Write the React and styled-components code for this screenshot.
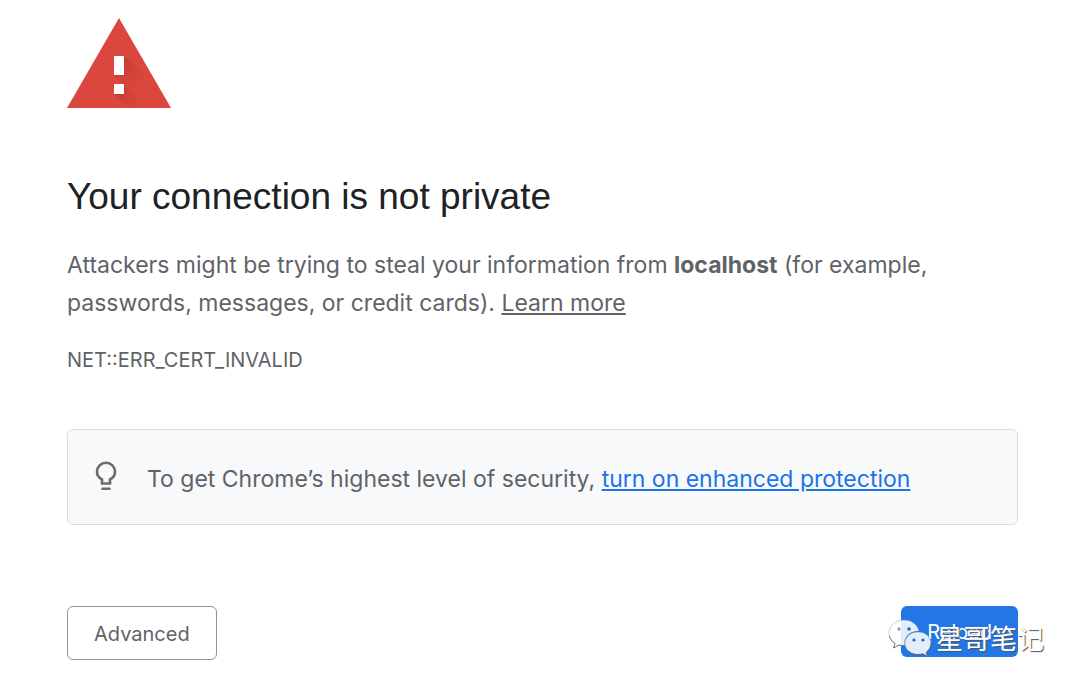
import React from 'react';
import styled, { createGlobalStyle } from 'styled-components';

const GlobalStyle = createGlobalStyle`
  body {
    margin: 0;
    background: #fff;
    color: #5f6368;
    font-family: Inter, "Liberation Sans", sans-serif;
    font-size: 23px;
    line-height: 38px;
  }
`;

const Page = styled.main`
  box-sizing: border-box;
  padding: 18px 62px 27px 67px;
`;

const WarningIcon = styled.svg`
  display: block;
  width: 104px;
  height: 90px;
`;

const Title = styled.h1`
  margin: 66px 0 26px;
  color: #202124;
  font-family: "Liberation Sans", Arial, sans-serif;
  font-size: 37px;
  font-weight: 400;
  line-height: 46px;
`;

const Message = styled.p`
  margin: 0;
`;

const ErrorCode = styled.div`
  margin-top: 24px;
  font-size: 20px;
  line-height: 28px;
`;

const Link = styled.a`
  color: ${({ $primary }) => ($primary ? '#1a73e8' : '#5f6368')};
  text-decoration: underline;
`;

const Tip = styled.section`
  display: flex;
  align-items: flex-start;
  gap: 30px;
  margin-top: 55px;
  padding: 30px 28px 26px 27px;
  border: 1px solid #dadce0;
  border-radius: 6px;
  background: #f8f9fb;
`;

const BulbIcon = styled.svg`
  flex: none;
  width: 22px;
  height: 32px;
`;

const TipText = styled.p`
  margin: 0;
`;

const Actions = styled.div`
  display: flex;
  align-items: flex-start;
  justify-content: space-between;
  margin-top: 81px;
`;

const Button = styled.button`
  box-sizing: border-box;
  padding: ${({ $primary }) => ($primary ? '2px 26px 0' : '2px 26px 0')};
  border: ${({ $primary }) => ($primary ? 'none' : '1px solid #8f959b')};
  border-radius: 6px;
  background: ${({ $primary }) => ($primary ? '#2276e6' : '#fff')};
  color: ${({ $primary }) => ($primary ? '#fff' : '#5f6368')};
  font-family: inherit;
  font-size: 20px;
  line-height: ${({ $primary }) => ($primary ? '49px' : '50px')};
`;

const ReloadArea = styled.div`
  position: relative;
`;

const Watermark = styled.div`
  position: absolute;
  top: 12px;
  right: -26px;
  display: flex;
  align-items: center;
  gap: 4px;
  color: #fff;
  font-family: "Noto Sans CJK SC", sans-serif;
  font-size: 27px;
  line-height: 40px;
  white-space: nowrap;
  text-shadow: 1px 1px 1px #555;
  pointer-events: none;
`;

const ChatIcon = styled.svg`
  width: 44px;
  height: 38px;
`;

export default function App() {
  return (
    <>
      <GlobalStyle />
      <Page>
        <WarningIcon viewBox="0 0 104 90" aria-hidden="true">
          <defs>
            <linearGradient id="shade" x1="50" y1="40" x2="82" y2="72" gradientUnits="userSpaceOnUse">
              <stop offset="0" stopColor="#a92f28" stopOpacity=".6" />
              <stop offset=".6" stopColor="#c53d34" stopOpacity=".2" />
              <stop offset="1" stopColor="#db4437" stopOpacity="0" />
            </linearGradient>
            <linearGradient id="lowShade" x1="50" y1="68" x2="70" y2="88" gradientUnits="userSpaceOnUse">
              <stop offset="0" stopColor="#a92f28" stopOpacity=".6" />
              <stop offset="1" stopColor="#c53d34" stopOpacity=".1" />
            </linearGradient>
          </defs>
          <path d="M52 0 104 90H0Z" fill="#db473e" />
          <path d="M57 38 90 66l14 24H81L47 57Z" fill="url(#shade)" />
          <path d="M57 67 80 90H61L47 76Z" fill="url(#lowShade)" />
          <path d="M47 38h10v19H47zM47 66h10v10H47z" fill="#fff" />
        </WarningIcon>
        <Title>Your connection is not private</Title>
        <Message>
          Attackers might be trying to steal your information from <strong>localhost</strong> (for
          example, passwords, messages, or credit cards). <Link href="#learn">Learn more</Link>
        </Message>
        <ErrorCode>NET::ERR_CERT_INVALID</ErrorCode>
        <Tip>
          <BulbIcon viewBox="0 -1 22 32" fill="none" stroke="#6b6b6b" aria-hidden="true">
            <path
              d="M7 22.5v-4.1C4 16.900 2 14 2 10.700a9 9 0 0 1 18 0c0 3.300-2 6.200-5 7.700v4.100Z"
              strokeWidth="2.600"
            />
            <path d="M7.500 27.700h7" strokeWidth="2.600" strokeLinecap="round" />
          </BulbIcon>
          <TipText>
            To get Chrome’s highest level of security,{' '}
            <Link $primary href="#protection">turn on enhanced protection</Link>
          </TipText>
        </Tip>
        <Actions>
          <Button type="button">Advanced</Button>
          <ReloadArea>
            <Button $primary type="button">Reload</Button>
            <Watermark>
              <ChatIcon viewBox="0 0 44 38" aria-hidden="true">
                <g fill="#fff" fillOpacity=".87" stroke="#777" strokeOpacity=".5" strokeWidth=".7">
                  <path d="M16 1C7.500 1 1 6.500 1 14c0 4.500 2.200 8 6 10.500L5.500 29l5.500-3c2 .6 4 .9 6 .8C15 18 22 12 31 12 29.500 5.500 23.500 1 16 1Z" />
                  <path d="M30 13c-7.500 0-13 4.900-13 11.200C17 30.500 22.500 35.500 30 35.500c1.600 0 3.200-.2 4.600-.7L39.500 37.500l-1.300-4.200c3-2.200 4.800-5.300 4.800-9.100C43 17.900 37.500 13 30 13Z" />
                </g>
                <g fill="none" stroke="#555" strokeOpacity=".75">
                  <path d="M1.500 17c.6 3.200 2.500 5.700 5.500 7.500L5.500 29l5.500-3c2 .6 4 .9 6 .8" />
                  <path d="M43 24.200c0 3.800-1.800 6.900-4.800 9.100l1.300 4.200-4.900-2.700c-5 1.600-11 .5-14.600-3" />
                </g>
                <circle cx="11" cy="10" r="1.700" fill="#999" />
                <g fill="#2468bd">
                  <circle cx="21" cy="10" r="1.800" />
                  <circle cx="26" cy="21" r="1.600" />
                  <circle cx="35" cy="21" r="1.600" />
                </g>
              </ChatIcon>
              <span>星哥笔记</span>
            </Watermark>
          </ReloadArea>
        </Actions>
      </Page>
    </>
  );
}
